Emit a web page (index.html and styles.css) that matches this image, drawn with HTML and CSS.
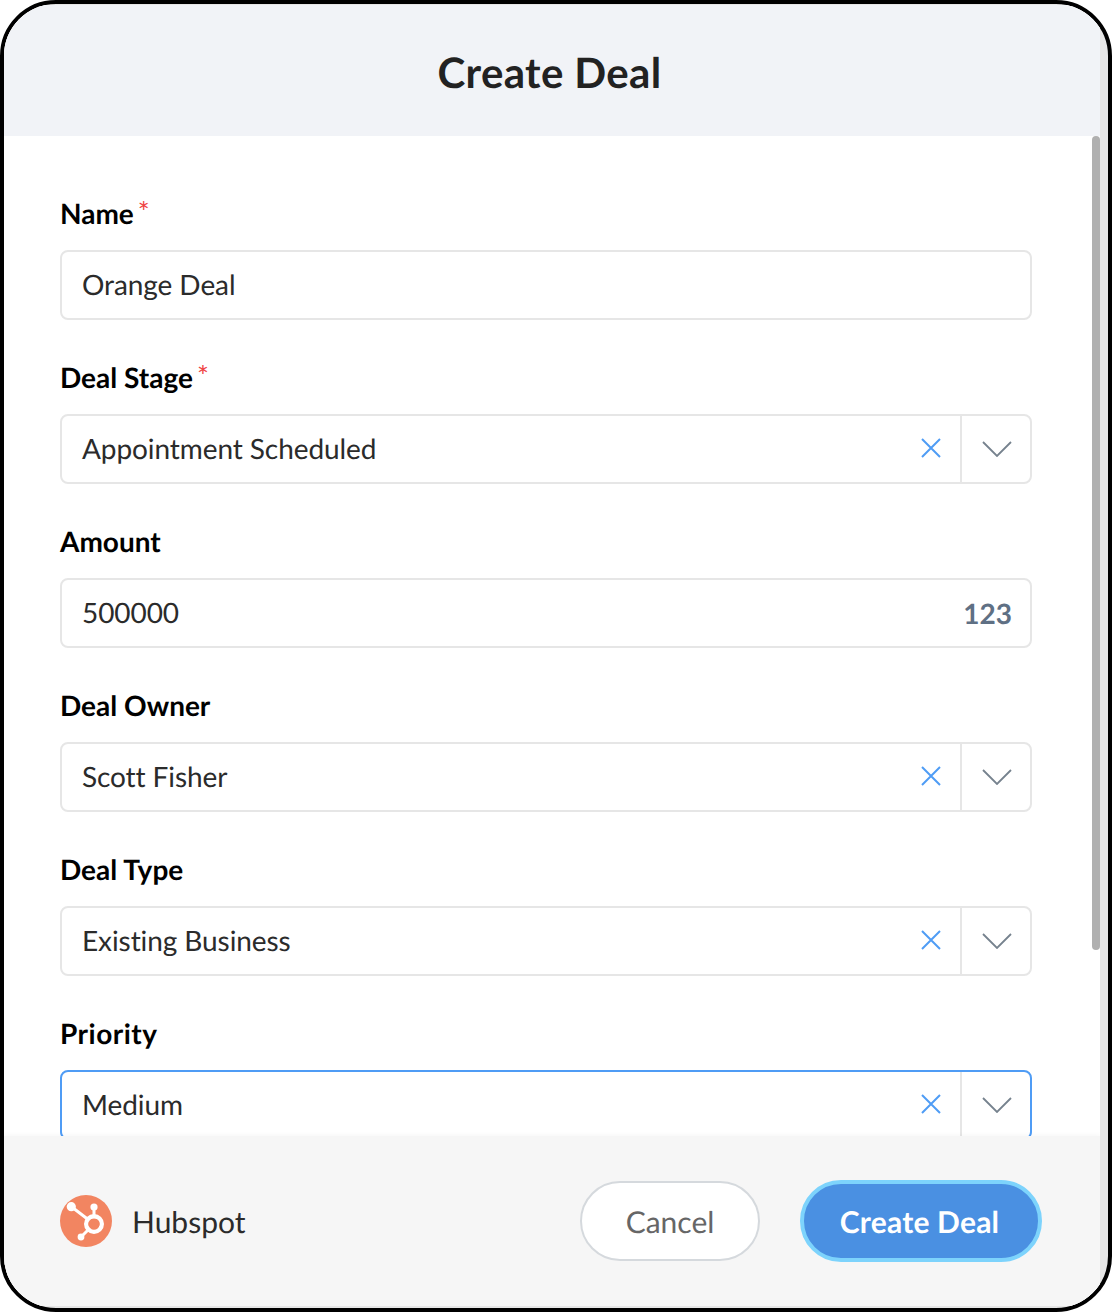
FILE: index.html
```html
<!DOCTYPE html>
<html lang="en">
<head>
<meta charset="utf-8">
<title>Create Deal</title>
<link rel="stylesheet" href="styles.css">
</head>
<body>
<div class="frame">
  <div class="panel">
    <header class="head"><h1 class="title">Create Deal</h1></header>
    <main class="form">
      <div class="field">
        <div class="label">Name<span class="req">*</span></div>
        <div class="box"><span class="value">Orange Deal</span></div>
      </div>
      <div class="field">
        <div class="label">Deal Stage<span class="req">*</span></div>
        <div class="box"><span class="value">Appointment Scheduled</span>
          <svg class="clear" viewBox="0 0 20 20"><path d="M1 1 19 19M19 1 1 19"/></svg>
          <span class="caret"><svg viewBox="0 0 30 16"><path d="M1 1 15 15 29 1"/></svg></span>
        </div>
      </div>
      <div class="field">
        <div class="label">Amount</div>
        <div class="box"><span class="value">500000</span><span class="num">123</span></div>
      </div>
      <div class="field">
        <div class="label">Deal Owner</div>
        <div class="box"><span class="value">Scott Fisher</span>
          <svg class="clear" viewBox="0 0 20 20"><path d="M1 1 19 19M19 1 1 19"/></svg>
          <span class="caret"><svg viewBox="0 0 30 16"><path d="M1 1 15 15 29 1"/></svg></span>
        </div>
      </div>
      <div class="field">
        <div class="label">Deal Type</div>
        <div class="box"><span class="value">Existing Business</span>
          <svg class="clear" viewBox="0 0 20 20"><path d="M1 1 19 19M19 1 1 19"/></svg>
          <span class="caret"><svg viewBox="0 0 30 16"><path d="M1 1 15 15 29 1"/></svg></span>
        </div>
      </div>
      <div class="field">
        <div class="label label-wide">Priority</div>
        <div class="box focus"><span class="value">Medium</span>
          <svg class="clear" viewBox="0 0 20 20"><path d="M1 1 19 19M19 1 1 19"/></svg>
          <span class="caret"><svg viewBox="0 0 30 16"><path d="M1 1 15 15 29 1"/></svg></span>
        </div>
      </div>
    </main>
    <div class="thumb"></div>
    <footer class="foot">
      <div class="brand">
        <svg class="logo" viewBox="0 0 52 52">
          <circle cx="26" cy="26" r="26" fill="#f28561"/>
          <g stroke="#fff" fill="none" stroke-linecap="round">
            <path d="M11.5 11.8 34 29" stroke-width="3"/>
            <path d="M34 12V29" stroke-width="3"/>
            <path d="M21 42 34 29" stroke-width="3"/>
            <circle cx="34" cy="29" r="7.8" stroke-width="4.4"/>
          </g>
          <circle cx="11.3" cy="11.7" r="4.6" fill="#fff"/>
          <circle cx="34" cy="12" r="3.6" fill="#fff"/>
          <circle cx="21" cy="42" r="3.4" fill="#fff"/>
          <circle cx="34" cy="29" r="5.6" fill="#f28561"/>
        </svg>
        <span class="brand-name">Hubspot</span>
      </div>
      <div class="actions">
        <button class="btn cancel" type="button">Cancel</button>
        <button class="btn primary" type="button">Create Deal</button>
      </div>
    </footer>
  </div>
</div>
</body>
</html>
```
FILE: styles.css
```css
* { box-sizing: border-box; }
html, body { margin: 0; padding: 0; background: #fff; }
body {
  width: 1112px; height: 1312px;
  font-family: Lato, "Liberation Sans", sans-serif;
  overflow: hidden;
  text-rendering: geometricPrecision;
  font-variant-ligatures: none;
}
.frame {
  width: 1112px; height: 1312px;
  border: 4px solid #000;
  border-radius: 56px;
  background: #e6e6e6;
  overflow: hidden;
  padding: 1px 8px 2px 0;
}
.panel {
  position: relative;
  height: 100%;
  display: flex;
  flex-direction: column;
  overflow: hidden;
  background: #fff;
}
.head {
  height: 131px;
  flex: none;
  display: flex;
  align-items: center;
  justify-content: center;
  background: #f1f3f7;
}
.title { margin: 0; font-size: 42px; font-weight: 700; letter-spacing: .35px; color: #222; line-height: 1; padding: 3px 5px 0 0; }
.form {
  flex: 1;
  min-height: 0;
  overflow: hidden;
  padding: 59px 68px 0 56px;
  display: flex;
  flex-direction: column;
  gap: 39px;
  background: #fff;
}
.field { flex: none; }
.label { font-size: 28px; font-weight: 700; line-height: 36px; margin-bottom: 19px; color: #000; }
.label-wide { letter-spacing: .5px; }
.req { color: #ef4444; font-size: 28px; font-weight: 400; margin-left: 4px; vertical-align: 2px; line-height: 1; }
.box {
  height: 70px;
  border: 2px solid #e6e6e6;
  border-radius: 8px;
  background: #fff;
  display: flex;
  align-items: center;
  padding-left: 20px;
  font-size: 28px;
  color: #2b2b2b;
}
.box.focus { border-color: #4f9cf5; }
.value { flex: 1; position: relative; top: -1px; letter-spacing: -.08px; }
.num { font-weight: 700; color: #5f7084; margin-right: 18px; }
.clear { width: 20px; height: 20px; margin-right: 19px; position: relative; top: -1px; }
.clear path { fill: none; stroke: #4f9cf5; stroke-width: 2; }
.caret {
  width: 70px;
  height: 100%;
  border-left: 2px solid #e6e6e6;
  display: flex;
  align-items: center;
  justify-content: center;
  padding-left: 2px;
}
.caret svg { width: 30px; height: 16px; }
.caret path { fill: none; stroke: #76828e; stroke-width: 1.8; }
.thumb {
  position: absolute;
  top: 131px; right: 0;
  width: 8px; height: 814px;
  background: #b0b0b0;
  border-radius: 4px;
}
.foot {
  flex: none;
  height: 170px;
  background: #f6f6f6;
  display: flex;
  align-items: center;
  justify-content: space-between;
  padding: 0 58px 0 56px;
  box-shadow: 0 -1px 5px rgba(0,0,0,.04);
  position: relative;
}
.brand { display: flex; align-items: center; gap: 20px; }
.logo { width: 52px; height: 52px; display: block; }
.brand-name { font-size: 30px; color: #2b2b2b; padding-top: 2px; }
.actions { display: flex; align-items: center; gap: 40px; }
.btn { font-family: inherit; font-size: 30px; border-radius: 41px; padding: 2px 0 0; text-rendering: geometricPrecision; font-variant-ligatures: none; }
.cancel { width: 180px; height: 80px; background: #fff; border: 2px solid #d5d9dd; color: #666; }
.primary { width: 242px; height: 82px; background: #4a90e2; border: 4px solid #7dd3fc; color: #fff; font-weight: 700; letter-spacing: .2px; padding-right: 3px; }
```
